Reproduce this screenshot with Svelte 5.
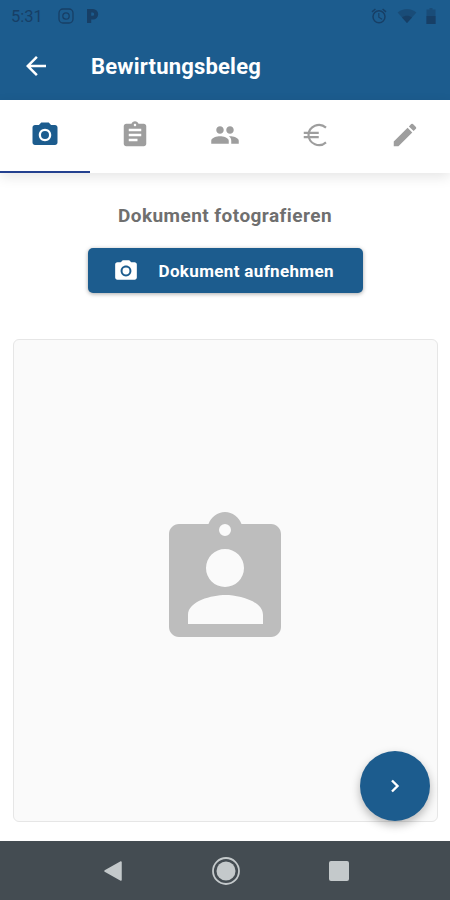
<script lang="ts">
	const camera =
		'M9 2 7.17 4H4c-1.1 0-2 .9-2 2v12c0 1.1.9 2 2 2h16c1.1 0 2-.9 2-2V6c0-1.1-.9-2-2-2h-3.17L15 2H9zm3 15c-2.76 0-5-2.24-5-5s2.24-5 5-5 5 2.24 5 5-2.24 5-5 5zm0-1.8a3.2 3.2 0 1 0 0-6.4 3.2 3.2 0 0 0 0 6.4z';

	const tabs = [
		{
			path: camera,
			active: true
		},
		{
			path: 'M19 3h-4.18C14.4 1.84 13.3 1 12 1s-2.4.84-2.82 2H5c-1.1 0-2 .9-2 2v14c0 1.1.9 2 2 2h14c1.1 0 2-.9 2-2V5c0-1.1-.9-2-2-2zm-7 0c.55 0 1 .45 1 1s-.45 1-1 1-1-.45-1-1 .45-1 1-1zm2 14H7v-2h7v2zm3-4H7v-2h10v2zm0-4H7V7h10v2z',
			active: false
		},
		{
			path: 'M16 11c1.66 0 2.99-1.34 2.99-3S17.66 5 16 5s-3 1.34-3 3 1.34 3 3 3zm-8 0c1.66 0 2.99-1.34 2.99-3S9.66 5 8 5 5 6.34 5 8s1.34 3 3 3zm0 2c-2.33 0-7 1.17-7 3.5V19h14v-2.5C15 14.17 10.33 13 8 13zm8 0c-.29 0-.62.02-.97.05 1.16.84 1.97 1.97 1.97 3.45V19h6v-2.5c0-2.33-4.67-3.5-7-3.5z',
			active: false
		},
		{
			// the euro sign is thinner than the material one, so it is stroked
			stroke: 'M20.8 6.1A8.4 8.4 0 0 0 6.800 12a8.400 8.400 0 0 0 14 5.900M3 10.300h12M3 13.700h12',
			active: false
		},
		{
			path: 'M3 17.25V21h3.75L17.81 9.94l-3.75-3.75L3 17.25zM20.71 7.04a1 1 0 0 0 0-1.41l-2.34-2.34a1 1 0 0 0-1.41 0l-1.83 1.83 3.75 3.75 1.83-1.83z',
			active: false
		}
	];
</script>

<div class="screen">
	<header class="appbar">
		<div class="status">
			<span class="time">5:31</span>
			<svg class="st-icon" viewBox="0 0 18 18" width="18" height="18">
				<rect x="2" y="2" width="14" height="14" rx="4" fill="none" stroke="currentColor" stroke-width="1.3" />
				<circle cx="9" cy="9" r="3.2" fill="none" stroke="currentColor" stroke-width="1.3" />
			</svg>
			<svg class="st-icon" viewBox="0 0 16 18" width="16" height="18">
				<path fill="currentColor" d="M3 2h6a5 5 0 0 1 0 10.4H7.2V16H3V2zm4.2 3.600v3.200H8.600a1.600 1.600 0 0 0 0-3.200H7.200z" />
			</svg>
			<span class="spacer"></span>
			<svg class="st-icon" viewBox="0 0 24 24" width="18" height="18">
				<path fill="currentColor" d="M22 5.720 17.400 1.860l-1.290 1.530 4.600 3.860L22 5.720zM7.880 3.390 6.600 1.860 2 5.710l1.290 1.530 4.590-3.850zM12.500 8H11v6l4.750 2.850.75-1.230-4-2.370V8zM12 4a9 9 0 1 0 .01 18.010A9 9 0 0 0 12 4zm0 16a7 7 0 1 1 0-14 7 7 0 0 1 0 14z" />
			</svg>
			<svg class="st-icon" viewBox="0 0 20 16" width="20" height="16">
				<path fill="currentColor" opacity="0.55" d="M10 15 .6 4.400C3.200 2.300 6.400 1 10 1s6.800 1.300 9.400 3.400L10 15z" />
				<path fill="currentColor" d="M10 15 5 9.400C6.400 8.400 8.100 7.800 10 7.800s3.600.6 5 1.600L10 15z" />
			</svg>
			<svg class="st-icon" viewBox="0 0 10 18" width="10" height="18">
				<path fill="currentColor" opacity="0.55" d="M3.500 1h3v1.500H9.500V17H.5V2.500h3V1z" />
				<path fill="currentColor" d="M.5 9h9v8h-9z" />
			</svg>
		</div>
		<div class="toolbar">
			<svg class="back" viewBox="0 0 24 24" width="30" height="30">
				<path fill="#fff" d="M20 11H7.830l5.590-5.590L12 4l-8 8 8 8 1.410-1.410L7.830 13H20v-2z" />
			</svg>
			<h1>Bewirtungsbeleg</h1>
		</div>
	</header>

	<nav class="tabs">
		{#each tabs as tab}
			<div class="tab" class:active={tab.active}>
				<svg viewBox="0 0 24 24" width="30" height="30">
					{#if tab.stroke}
						<path fill="none" stroke="currentColor" stroke-width="1.700" d={tab.stroke} />
					{:else}
						<path fill="currentColor" fill-rule="evenodd" d={tab.path} />
					{/if}
				</svg>
			</div>
		{/each}
	</nav>

	<main class="content">
		<h2>Dokument fotografieren</h2>
		<button class="capture" type="button">
			<svg viewBox="0 0 24 24" width="26" height="26">
				<path fill="#fff" fill-rule="evenodd" d={camera} />
			</svg>
			<span>Dokument aufnehmen</span>
		</button>

		<div class="preview">
			<svg viewBox="0 0 112 126" width="112" height="126">
				<path
					fill="#bdbdbd"
					fill-rule="evenodd"
					d="M10 12h29.500C42 5 48.500 0 56 0s14 5 16.500 12H102c5.500 0 10 4.500 10 10v93c0 5.500-4.500 10-10 10H10c-5.500 0-10-4.500-10-10V22c0-5.500 4.500-10 10-10zM56 12a6 6 0 1 0 0 12 6 6 0 0 0 0-12zm0 25a19 19 0 1 0 0 38 19 19 0 0 0 0-38zM19 112h75v-9c0-14-24-20-37.500-20S19 89 19 103v9z"
				/>
			</svg>
			<button class="fab" type="button" aria-label="Weiter">
				<svg viewBox="0 0 24 24" width="24" height="24">
					<path fill="none" stroke="#fff" stroke-width="2.400" d="m9 6.500 5.500 5.500L9 17.500" />
				</svg>
			</button>
		</div>
	</main>

	<footer class="navbar">
		<svg viewBox="0 0 20 22" width="20" height="22">
			<path fill="#c4c9cb" stroke="#c4c9cb" stroke-width="1.500" stroke-linejoin="round" d="M18 2v18L2 11z" />
		</svg>
		<svg viewBox="0 0 30 30" width="30" height="30">
			<circle cx="15" cy="15" r="13" fill="none" stroke="#c4c9cb" stroke-width="1.800" />
			<circle cx="15" cy="15" r="9.500" fill="#c4c9cb" />
		</svg>
		<div class="square"></div>
	</footer>
</div>

<style>
	:global(body) {
		margin: 0;
		background: #fff;
	}

	.screen {
		width: 450px;
		height: 900px;
		display: flex;
		flex-direction: column;
		overflow: hidden;
		font-family: Roboto, 'Liberation Sans', sans-serif;
	}

	.appbar {
		height: 100px;
		flex-shrink: 0;
		background: #1c5c8e;
		display: flex;
		flex-direction: column;
	}

	.status {
		height: 32px;
		display: flex;
		align-items: center;
		gap: 9px;
		padding: 0 14px 0 11px;
		color: #173f66;
	}

	.time {
		font-size: 16.5px;
		width: 37px;
	}

	.spacer {
		flex: 1;
	}

	.toolbar {
		flex: 1;
		display: flex;
		align-items: center;
		gap: 40px;
		padding: 0 0 0 21px;
	}

	h1 {
		margin: 0;
		font-size: 22px;
		font-weight: 700;
		letter-spacing: 0.2px;
		color: #fff;
	}

	.tabs {
		height: 73px;
		flex-shrink: 0;
		display: flex;
		position: relative;
		background: #fff;
		box-shadow: 0 4px 12px rgba(0, 0, 0, 0.1);
	}

	.tab {
		flex: 1;
		display: flex;
		justify-content: center;
		padding-top: 20px;
		color: #9e9e9e;
		box-sizing: border-box;
	}

	.tab.active {
		color: #1c5c8e;
		border-bottom: 2px solid #23408f;
	}

	.content {
		flex: 1;
		display: flex;
		flex-direction: column;
		align-items: center;
		min-height: 0;
	}

	h2 {
		margin: 32px 0 0;
		font-size: 19px;
		line-height: 22px;
		font-weight: 700;
		letter-spacing: 0.45px;
		color: #6f6f6f;
	}

	.capture {
		margin-top: 21px;
		width: 275px;
		height: 45px;
		display: flex;
		align-items: center;
		gap: 20px;
		padding: 0 0 0 25px;
		border: none;
		border-radius: 5px;
		background: #1c5c8e;
		color: #fff;
		font-family: inherit;
		font-size: 17px;
		font-weight: 700;
		letter-spacing: 0.35px;
		box-shadow: 0 1px 4px rgba(0, 0, 0, 0.35);
	}

	.preview {
		margin-top: 46px;
		width: 425px;
		height: 483px;
		box-sizing: border-box;
		padding-bottom: 12px;
		position: relative;
		display: flex;
		align-items: center;
		justify-content: center;
		background: #fafafa;
		border: 1px solid #e6e6e6;
		border-radius: 6px;
	}

	.fab {
		position: absolute;
		right: 7px;
		bottom: 0;
		width: 70px;
		height: 70px;
		padding: 0;
		display: flex;
		align-items: center;
		justify-content: center;
		border: none;
		border-radius: 50%;
		background: #1c5c8e;
		box-shadow: 0 4px 10px rgba(0, 0, 0, 0.28);
	}

	.navbar {
		height: 59px;
		flex-shrink: 0;
		background: #444c52;
		display: flex;
		align-items: center;
		justify-content: center;
		padding-left: 2px;
	}

	.navbar > * {
		margin: 0 44px;
	}

	.square {
		width: 20px;
		height: 20px;
		border-radius: 2px;
		background: #c4c9cb;
	}
</style>
